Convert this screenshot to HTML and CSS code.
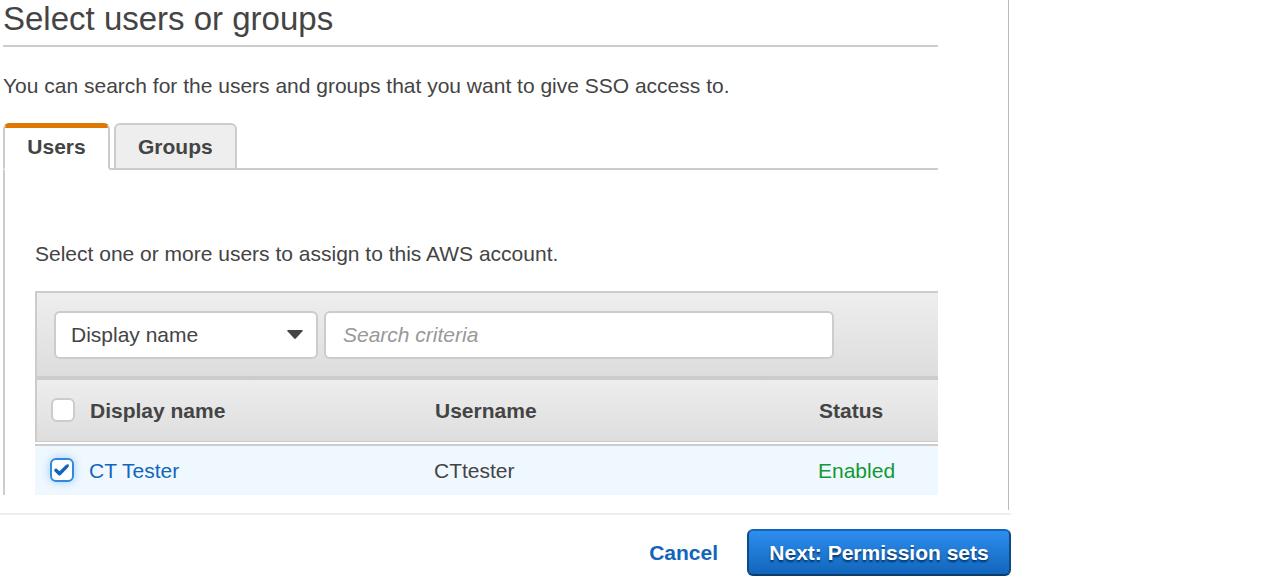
FILE: index.html
```
<!DOCTYPE html>
<html lang="en">
<head>
<meta charset="utf-8">
<title>Select users or groups</title>
<link rel="stylesheet" href="styles.css">
</head>
<body>
<div class="page">
<form class="wizard">
  <main class="content">
    <h1 class="title">Select users or groups</h1>
    <p class="intro">You can search for the users and groups that you want to give SSO access to.</p>
    <div class="tabs" role="tablist">
      <button type="button" class="tab tab-active" role="tab" id="tab-users" aria-selected="true" aria-controls="panel-users">Users</button>
      <button type="button" class="tab" role="tab" aria-selected="false">Groups</button>
    </div>
    <section class="panel" role="tabpanel" id="panel-users" aria-labelledby="tab-users">
      <p class="hint">Select one or more users to assign to this AWS account.</p>
      <div class="filter">
        <span class="select-wrap">
          <select class="field select" aria-label="Search by">
            <option>Display name</option>
            <option>Username</option>
          </select>
          <svg class="arrow" viewBox="0 0 16 9" aria-hidden="true"><path d="M1 0h14q1.400 0 .5 1.200L8.800 8.600q-.8.700-1.600 0L.5 1.200Q-.4 0 1 0z" fill="#444"/></svg>
        </span>
        <input class="field search" type="text" placeholder="Search criteria" aria-label="Search criteria">
      </div>
      <table class="users">
        <colgroup><col class="col-check"><col class="col-name"><col class="col-user"><col class="col-status"></colgroup>
        <thead>
          <tr>
            <th class="check-cell"><span class="check"><input class="box" type="checkbox" aria-label="Select all users"></span></th>
            <th scope="col">Display name</th>
            <th scope="col">Username</th>
            <th scope="col">Status</th>
          </tr>
        </thead>
        <tbody>
          <tr>
            <td class="check-cell"><span class="check"><input class="box" type="checkbox" checked aria-label="Select CT Tester"><svg class="tick" viewBox="0 0 24 24" aria-hidden="true"><path d="M6.800 10.700L9.500 13.200L15.600 7.300Q17 6.100 18.700 6.300Q19.400 8.200 18 9.600L10.800 17Q9.500 18.200 8.200 17L4.700 13.600Q3.700 12.300 4.500 11.200Q5.600 9.900 6.800 10.700z" fill="#1166bb"/></svg></span></td>
            <td><a class="link" href="#">CT Tester</a></td>
            <td>CTtester</td>
            <td class="enabled">Enabled</td>
          </tr>
        </tbody>
      </table>
    </section>
  </main>
  <footer class="actions">
    <a class="cancel" href="#">Cancel</a>
    <button class="next" type="submit">Next: Permission sets</button>
  </footer>
</form>
</div>
</body>
</html>
```
FILE: styles.css
```
* {
  box-sizing: border-box;
}

body {
  margin: 0;
  background: #fff;
  color: #444;
  font: 21px/24px "Liberation Sans", Arial, sans-serif;
}

button,
input,
select {
  font: inherit;
  color: inherit;
}

.page {
  display: grid;
  grid-template-columns: minmax(0, 1011fr) 254fr;
}

.content {
  margin-right: 2px;
  padding: 0 70px 15px 3px;
  border-right: 1px solid #bbb;
}

.title {
  margin: 0;
  padding-bottom: 7px;
  border-bottom: 2px solid #ccc;
  font-size: 33px;
  font-weight: normal;
  line-height: 38px;
}

.intro {
  margin: 27px 0 25px;
}

.tabs {
  display: flex;
  gap: 4px;
  height: 47px;
  box-shadow: inset 0 -2px #ccc;
}

.tab {
  min-width: 107px;
  padding: 0 22px;
  border: 2px solid #ccc;
  border-radius: 6px 6px 0 0;
  background: #eee;
  font-weight: bold;
}

.tab-active {
  border-bottom-color: #fff;
  border-radius: 6px 6px 0 2px;
  background: linear-gradient(#e07700 5px, #fff 5px) border-box;
  border-top-color: #e07700;
}

.panel {
  padding: 72px 0 0 30px;
  border-left: 2px solid #ccc;
}

.hint {
  margin: 0 0 25px;
}

.filter {
  display: flex;
  gap: 6px;
  padding: 18px 104px 17px 17px;
  border: solid #ccc;
  border-width: 2px 0 2px 2px;
  background: linear-gradient(#eee, #ddd);
}

.select-wrap {
  position: relative;
  flex: 0 0 264px;
}

.field {
  width: 100%;
  height: 48px;
  border: 2px solid #ccc;
  border-radius: 6px;
  background: #fff;
}

.select {
  padding: 0 40px 0 15px;
  appearance: none;
}

.arrow {
  position: absolute;
  top: 19px;
  right: 15px;
  width: 16px;
  height: 9px;
  pointer-events: none;
}

.search {
  flex: 1;
  min-width: 0;
  padding: 0 17px;
}

.search::placeholder {
  color: #999;
  font-style: italic;
  opacity: 1;
}

.users {
  width: 100%;
  table-layout: fixed;
  border-spacing: 0;
  text-align: left;
}

.col-check {
  width: 54px;
}

.col-name {
  width: 345px;
}

.col-user {
  width: 384px;
}

.users thead {
  background: linear-gradient(#eee, #ddd);
}

.users th {
  height: 66px;
  padding: 0 0 0 1px;
  border: solid;
  border-width: 2px 0;
  border-color: #ccc transparent #fff;
  box-shadow: inset 0 -1px #ccc;
}

.users th.check-cell {
  padding: 0 0 2px 16px;
  box-shadow: inset 2px 0 #ccc, inset 0 -1px #ccc;
}

.users td {
  height: 51px;
  padding: 0;
  border-top: 2px solid #ccc;
  background: #f0f8ff;
}

.users td.check-cell {
  padding: 0 0 2px 15px;
}

.check {
  position: relative;
  display: block;
  width: 24px;
  height: 24px;
}

.box {
  display: block;
  width: 24px;
  height: 24px;
  margin: 0;
  border: 2px solid #ccc;
  border-radius: 6px;
  background: #fff;
  appearance: none;
}

.box:checked {
  border-color: #3388dd;
  box-shadow: 0 0 10px #99ccff;
}

.tick {
  position: absolute;
  inset: 0;
  pointer-events: none;
}

.link,
.cancel {
  color: #1166bb;
  text-decoration: none;
}

.users .enabled {
  color: #119933;
}

.actions {
  display: flex;
  justify-content: flex-end;
  align-items: center;
  gap: 29px;
  margin-top: 3px;
  padding: 14px 0 10px;
  border-top: 2px solid #eee;
  font-weight: bold;
}

.next {
  min-width: 264px;
  height: 47px;
  padding: 0 20px;
  border: 2px solid;
  border-color: #1166bb #0f4a85 #0a3c70;
  border-radius: 6px;
  background: linear-gradient(#2e8def, #1166bb);
  color: #fff;
  text-shadow: 0 2px 2px #003366;
}
```
